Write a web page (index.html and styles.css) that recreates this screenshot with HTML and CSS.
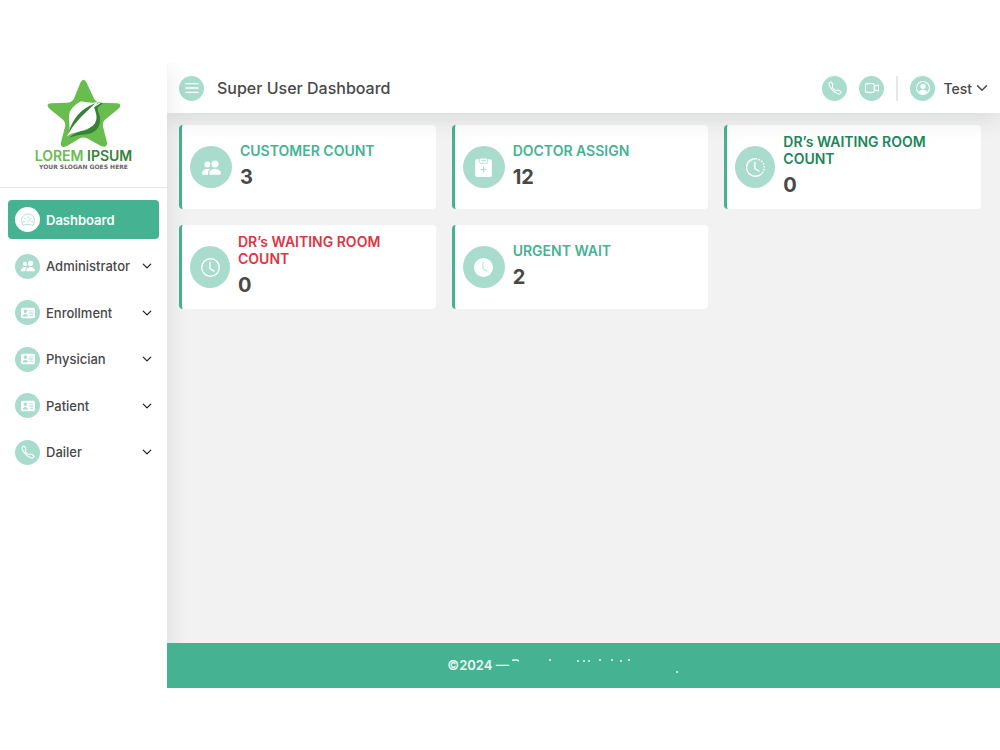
FILE: index.html
```html
<!DOCTYPE html>
<html lang="en">
<head>
<meta charset="utf-8">
<meta name="viewport" content="width=device-width, initial-scale=1">
<title>Super User Dashboard</title>
<link rel="stylesheet" href="styles.css">
</head>
<body>
<svg class="sprite" aria-hidden="true">
  <symbol id="chevron" viewBox="0 0 16 16"><path d="M2 5l6 6 6-6" fill="none" stroke="currentColor" stroke-width="2" stroke-linecap="round" stroke-linejoin="round"/></symbol>
  <symbol id="phone" viewBox="0 0 16 16"><path d="M3.65 1.33a.8.8 0 0 0-1.01-.07L1.6 2.3c-.48.48-.66 1.17-.45 1.77a17.6 17.6 0 0 0 4.17 6.61 17.6 17.6 0 0 0 6.61 4.17c.6.2 1.29.03 1.77-.45l1.03-1.04a.7.7 0 0 0-.06-1.01l-2.3-1.8a.7.7 0 0 0-.59-.12l-2.19.55a1.75 1.75 0 0 1-1.65-.46L5.48 8.06a1.75 1.75 0 0 1-.46-1.65l.55-2.2a.7.7 0 0 0-.12-.58z" fill="none" stroke="currentColor" stroke-width="1.2"/></symbol>
  <symbol id="people" viewBox="0 0 16 16"><path d="M7 14s-1 0-1-1 1-4 5-4 5 3 5 4-1 1-1 1zm4-6a3 3 0 1 0 0-6 3 3 0 0 0 0 6m-5.780 6A2.240 2.240 0 0 1 5 13c0-1.350.68-2.750 1.940-3.720A6.300 6.300 0 0 0 5 9c-4 0-5 3-5 4s1 1 1 1zM4.500 8a2.500 2.500 0 1 0 0-5 2.500 2.500 0 0 0 0 5" fill="currentColor"/></symbol>
  <symbol id="card" viewBox="0 0 16 16"><path fill-rule="evenodd" fill="currentColor" d="M2 2h12a2 2 0 0 1 2 2v8a2 2 0 0 1-2 2H2a2 2 0 0 1-2-2V4a2 2 0 0 1 2-2m7 3v1h5V5zm0 2.500v1h5v-1zm1 2.500v1h4v-1zM5 8a2 2 0 1 0 0-4 2 2 0 0 0 0 4m-3 4h6c0-2-1-3-3-3s-3 1-3 3"/></symbol>
  <symbol id="gauge" viewBox="0 0 16 16"><g fill="none" stroke="currentColor" stroke-linecap="round"><path d="M2.300 13.500a7.500 7.500 0 1 1 11.400 0c-.4.500-1 .5-2 .2-2.500-.9-4.900-.9-7.400 0-1 .3-1.600.3-2-.2z"/><path d="M8 4v1.500M3.800 5.800l1 1M2.300 10h1.500M12.200 10h1.500M7.500 10.500l4-4.500"/></g></symbol>
  <symbol id="menu" viewBox="0 0 16 16"><path d="M1 3h14M1 8h14M1 13h14" stroke="currentColor" stroke-width="1.500" stroke-linecap="round"/></symbol>
  <symbol id="video" viewBox="0 0 16 16"><g fill="none" stroke="currentColor" stroke-width="1.200" stroke-linejoin="round"><rect x=".6" y="3" width="10" height="10" rx="1.500"/><path d="M10.600 6.200l3.700-1.700c.6-.2 1.100 0 1.100.600v5.800c0 .600-.5.800-1.100.600l-3.700-1.700z"/></g></symbol>
  <symbol id="user" viewBox="0 0 16 16"><circle cx="8" cy="8" r="7.400" fill="none" stroke="currentColor" stroke-width="1.200"/><circle cx="8" cy="6" r="3" fill="currentColor"/><path d="M2.500 13c1-2 3-3 5.500-3s4.500 1 5.500 3A7.500 7.500 0 0 1 8 15.300 7.500 7.500 0 0 1 2.500 13" fill="currentColor"/></symbol>
  <symbol id="clipboard" viewBox="0 0 16 16"><rect x="1" y="1" width="14" height="15" rx="1.500" fill="currentColor"/><rect x="4.500" y="0" width="7" height="4.500" rx="1.500" fill="currentColor" stroke="#a9dccd" stroke-width=".7"/><path d="M6.500 2.300h3M8 7.700v4M6 9.700h4" stroke="#a9dccd" stroke-width=".9" stroke-linecap="round"/></symbol>
  <symbol id="clock" viewBox="0 0 16 16"><circle cx="8" cy="8" r="7.400" fill="none" stroke="currentColor" stroke-width="1.200"/><path d="M7.500 3.500V9l3.500 2" fill="none" stroke="currentColor" stroke-width="1.100" stroke-linecap="round"/></symbol>
  <symbol id="clock-history" viewBox="0 0 16 16"><g fill="none" stroke="currentColor" stroke-width="1.200"><path d="M8 .600a7.400 7.400 0 1 0 5.200 12.600"/><path d="M8 .600a7.400 7.400 0 0 1 5.200 12.600" stroke-dasharray="1.500 1"/><path d="M7.500 3.500V9l3.500 2" stroke-linecap="round"/></g></symbol>
  <symbol id="clock-fill" viewBox="0 0 16 16"><circle cx="8" cy="8" r="8" fill="currentColor"/><path d="M7.500 3.500V9l3.500 2" fill="none" stroke="#a9dccd" stroke-width=".8" stroke-linecap="round"/></symbol>
</svg>

<div class="app">
  <aside class="sidebar">
    <div class="brand">
      <svg class="brand-mark" viewBox="0 0 74 72" preserveAspectRatio="none" aria-hidden="true">
        <path d="M33.500 3.500Q36.500-2 39.500 3.500L47 20Q49 24 53 24.500L70 25Q76 26 71.500 30.500L58 42Q55 45 56 49L60 65Q60.500 71.500 54 69L40 61Q36.500 59.500 33 61L20 69Q13 72 14 65L18 49Q19 45 16 42L2.500 30.500Q-2 26 4 25L20 24.500Q25 24 27 20z" fill="#69bd4f"/>
        <path d="M22 61C34 54 46 61 52 48C56 37 49 34 51 29L56 25C47 22 47 29 48 32C49 40 48 47 41 52C35 54 28 54 22 61" fill="#378238"/>
        <path d="M20 59C24 52 22 47 22 41C21 31 29 26 34 23C39 24 44 25 51 24L47 29C50 37 52 45 43 50C35 55 26 54 20 59" fill="#fff"/>
        <path d="M21 57C25 42 33 31 48 25C40 34 29 42 21 57" fill="#378238"/>
        <path d="M46 29L53 24.500" stroke="#fff" stroke-width="1.200"/>
      </svg>
      <div class="brand-name"><span class="brand-light">LOREM</span> IPSUM</div>
      <div class="brand-slogan">YOUR SLOGAN GOES HERE</div>
    </div>
    <nav aria-label="Main">
      <ul class="nav">
        <li><a class="nav-item active" href="#"><span class="disc"><svg class="icon"><use href="#gauge"/></svg></span>Dashboard</a></li>
        <li><button class="nav-item" type="button"><span class="disc"><svg class="icon"><use href="#people"/></svg></span>Administrator<svg class="chevron"><use href="#chevron"/></svg></button></li>
        <li><button class="nav-item" type="button"><span class="disc"><svg class="icon"><use href="#card"/></svg></span>Enrollment<svg class="chevron"><use href="#chevron"/></svg></button></li>
        <li><button class="nav-item" type="button"><span class="disc"><svg class="icon"><use href="#card"/></svg></span>Physician<svg class="chevron"><use href="#chevron"/></svg></button></li>
        <li><button class="nav-item" type="button"><span class="disc"><svg class="icon"><use href="#card"/></svg></span>Patient<svg class="chevron"><use href="#chevron"/></svg></button></li>
        <li><button class="nav-item" type="button"><span class="disc"><svg class="icon"><use href="#phone"/></svg></span>Dailer<svg class="chevron"><use href="#chevron"/></svg></button></li>
      </ul>
    </nav>
  </aside>

  <div class="content">
    <header class="topbar">
      <button class="disc" type="button" aria-label="Toggle menu"><svg class="icon"><use href="#menu"/></svg></button>
      <h1 class="title">Super User Dashboard</h1>
      <div class="actions">
        <button class="disc" type="button" aria-label="Call"><svg class="icon"><use href="#phone"/></svg></button>
        <button class="disc" type="button" aria-label="Video call"><svg class="icon"><use href="#video"/></svg></button>
        <button class="account" type="button"><span class="disc"><svg class="icon"><use href="#user"/></svg></span>Test<svg class="chevron"><use href="#chevron"/></svg></button>
      </div>
    </header>

    <main class="cards">
      <article class="card"><span class="disc large"><svg class="icon"><use href="#people"/></svg></span><div class="info"><h2 class="label">CUSTOMER COUNT</h2><p class="value">3</p></div></article>
      <article class="card"><span class="disc large"><svg class="icon"><use href="#clipboard"/></svg></span><div class="info"><h2 class="label">DOCTOR ASSIGN</h2><p class="value">12</p></div></article>
      <article class="card"><span class="disc large narrow"><svg class="icon"><use href="#clock-history"/></svg></span><div class="info"><h2 class="label success">DR’s WAITING ROOM COUNT</h2><p class="value">0</p></div></article>
      <article class="card"><span class="disc large narrow"><svg class="icon"><use href="#clock"/></svg></span><div class="info"><h2 class="label danger">DR’s WAITING ROOM COUNT</h2><p class="value">0</p></div></article>
      <article class="card"><span class="disc large"><svg class="icon"><use href="#clock-fill"/></svg></span><div class="info"><h2 class="label">URGENT WAIT</h2><p class="value">2</p></div></article>
    </main>

    <footer class="footer">
      <span>©2024 —</span>
      <svg class="footer-marks" viewBox="0 0 168 16" aria-hidden="true"><path d="M1 4V3h4l2 1M37 3h2M65 4h2M71 4h2M76 4h2M87 3h2M99 3h2M108 4h2M116 3h2M164 15h2" fill="none" stroke="currentColor" stroke-width="1.500"/></svg>
    </footer>
  </div>
</div>
</body>
</html>
```
FILE: styles.css
```css
* { box-sizing: border-box; }

body {
  margin: 0;
  padding: 63px 0 62px;
  min-height: 100vh;
  display: flex;
  background: #fff;
  color: #484848;
  font-family: Inter, "Open Sans", sans-serif;
  font-size: 13px;
}

h1, h2, p, ul { margin: 0; padding: 0; }
ul { list-style: none; }

button {
  border: 0;
  padding: 0;
  background: none;
  color: inherit;
  font: inherit;
  cursor: pointer;
}

.sprite { display: none; }

.app { flex: 1; display: flex; min-width: 0; }

.sidebar {
  position: relative;
  z-index: 2;
  width: 167px;
  flex: none;
  background: #fff;
  box-shadow: 2px 6px 20px rgba(40, 50, 60, 0.1);
  clip-path: inset(0 -30px 0 0);
}

.brand {
  height: 125px;
  padding-top: 16px;
  display: flex;
  flex-direction: column;
  align-items: center;
  border-bottom: 1px solid #e6e8e8;
}
.brand-mark { width: 74px; height: 70px; flex: none; }
.brand-name { font-size: 14px; line-height: 14px; font-weight: 600; color: #378238; white-space: nowrap; }
.brand-light { color: #69bd4f; }
.brand-slogan { font: bold 6px/7px "DejaVu Sans", sans-serif; color: #666; white-space: nowrap; }

.nav {
  height: 272px;
  margin: 12px 8px 0;
  display: flex;
  flex-direction: column;
  justify-content: space-between;
}
.nav-item {
  width: 100%;
  height: 39px;
  padding: 0 7px;
  display: flex;
  align-items: center;
  gap: 6px;
  border-radius: 4px;
  font-weight: 500;
  text-align: left;
  text-decoration: none;
  white-space: nowrap;
}
.nav-item .chevron { margin-left: auto; color: #222; }
.active { background: #45b392; color: #fff; font-weight: 600; }

.disc {
  width: 25px;
  height: 25px;
  flex: none;
  display: grid;
  place-items: center;
  border-radius: 50%;
  background: #a9dccd;
  color: #fff;
}
.active .disc { background: #fff; color: #a9dccd; }
.icon { width: 14px; height: 14px; }
.chevron { width: 10px; height: 10px; flex: none; }

.large { width: 42px; height: 42px; }
.large .icon { width: 19px; height: 19px; }
.narrow { width: 40px; }

.content {
  flex: 1;
  min-width: 0;
  display: flex;
  flex-direction: column;
  background: #f2f2f2;
}

.topbar {
  position: relative;
  z-index: 1;
  height: 50px;
  padding: 0 12px;
  display: flex;
  align-items: center;
  gap: 13px;
  background: #fff;
  box-shadow: 0 4px 24px rgba(40, 50, 60, 0.14);
  clip-path: inset(0 0 -40px 0);
}
.title { font-size: 16px; font-weight: 500; }
.actions { margin-left: auto; display: flex; gap: 12px; }
.account {
  display: flex;
  align-items: center;
  gap: 8px;
  padding-left: 12px;
  border-left: 2px solid #e6e8e8;
  font-size: 14px;
  font-weight: 500;
}
.account .chevron { width: 12px; height: 12px; margin-left: -4px; }

.cards {
  flex: 1;
  padding: 12px 19px 12px 12px;
  display: grid;
  grid-template-columns: repeat(3, 1fr);
  grid-auto-rows: 84px;
  align-content: start;
  gap: 16px;
}
.card {
  padding: 0 30px 0 8px;
  display: flex;
  align-items: center;
  gap: 8px;
  border-left: 3px solid #45b392;
  border-radius: 4px;
  background: #fff;
}
.info { padding-bottom: 3px; }
.label { font-size: 14px; line-height: 17px; font-weight: 600; color: #45b392; }
.success { color: #21865b; }
.danger { color: #dc3545; }
.value { margin-top: 5px; font-size: 20px; line-height: 26px; font-weight: 700; }

.footer {
  position: relative;
  z-index: 3;
  height: 45px;
  padding: 0 40px 2px 0;
  display: flex;
  align-items: center;
  justify-content: center;
  gap: 3px;
  background: #45b392;
  color: #e9f8f3;
  font-weight: 600;
}
.footer-marks { width: 168px; height: 16px; }
```
